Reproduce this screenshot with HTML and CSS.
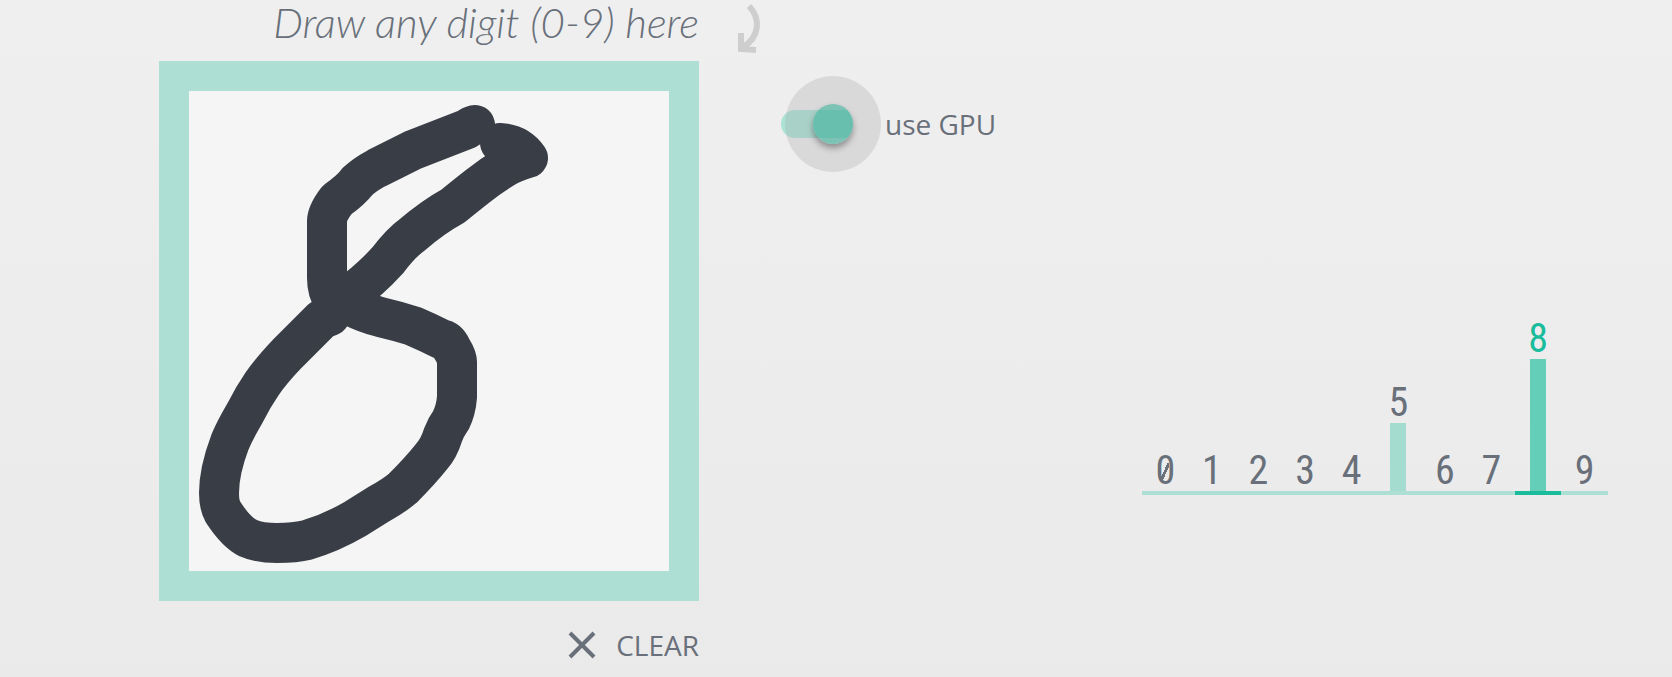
FILE: index.html
```html
<!DOCTYPE html>
<html lang="en">
<head>
<meta charset="utf-8">
<meta name="viewport" content="width=device-width, initial-scale=1">
<title>Digit recognition</title>
<link rel="stylesheet" href="styles.css">
</head>
<body>
<main class="demo">
  <section class="draw">
    <h1 class="hint">Draw any digit (0-9) here</h1>
    <svg class="pad" viewBox="0 0 480 480" role="img" aria-label="Hand-drawn eight">
      <path class="ink" d="M286 34 Q282 35 278 38 Q252 48 224 59 Q206 68 188 77 Q175 84 168 91 Q162 99 148 109 Q138 122 138 130 V187 Q138 200 144 209 Q152 211 162 215 Q176 222 191 226 Q208 230 224 235 Q238 241 252 248 Q259 249 263 258 Q268 266 268 271 V306 Q267 319 262 329 Q257 336 254 344 Q250 357 243 365 Q231 380 214 397 Q206 404 190 413 Q182 418 166 428 Q142 442 118 449 Q106 452 88 452 Q70 452 59 447 Q47 441 34 421 Q30 414 30 402 Q30 380 41 351 Q46 339 56 322 Q64 306 73 293 Q81 281 98 263 L133 228 L141 225 Q145 219 156 207 Q180 190 199 169 Q212 152 223 144 Q244 126 264 115 Q275 106 289 95 Q303 84 318 75 Q326 71 339 67 Q329 53 311 52"/>
    </svg>
    <button class="clear" type="button">
      <svg class="cross" viewBox="0 0 28 28" aria-hidden="true"><path d="M2 2 26 26M26 2 2 26"/></svg>
      <span>CLEAR</span>
    </button>
  </section>
  <section class="controls">
    <svg class="arrow" viewBox="0 0 28 56" aria-hidden="true"><path d="M14 6C26 19 25 37 7 48M6 33V49L21 50"/></svg>
    <label class="gpu"><input class="switch" type="checkbox" checked><span>use GPU</span></label>
  </section>
  <section class="chart" aria-label="Digit probabilities">
    <div class="col"><span class="digit zero">0</span></div>
    <div class="col"><span class="digit">1</span></div>
    <div class="col"><span class="digit">2</span></div>
    <div class="col"><span class="digit">3</span></div>
    <div class="col"><span class="digit">4</span></div>
    <div class="col"><span class="digit">5</span><span class="bar" style="height:68px"></span></div>
    <div class="col"><span class="digit">6</span></div>
    <div class="col"><span class="digit">7</span></div>
    <div class="col best"><span class="digit">8</span><span class="bar" style="height:132px"></span></div>
    <div class="col"><span class="digit">9</span></div>
  </section>
</main>
</body>
</html>
```
FILE: styles.css
```css
* { box-sizing: border-box; }
body {
  margin: 0;
  min-height: 100vh;
  background: linear-gradient(#efefef, #eaeaea);
  color: #69707a;
  font-family: "Open Sans", "Noto Sans", sans-serif;
  font-size: 28px;
  line-height: 40px;
}
.demo {
  display: flex;
  align-items: flex-start;
  padding: 0 64px 0 159px;
}
.draw {
  flex: 0 1 540px;
  display: flex;
  flex-direction: column;
}
.hint {
  margin: 0;
  padding-bottom: 17px;
  text-align: right;
  white-space: nowrap;
  font-family: Lato, sans-serif;
  font-weight: 300;
  font-style: italic;
  font-size: 42px;
  line-height: 44px;
}
.pad {
  display: block;
  width: 100%;
  aspect-ratio: 1;
  border: 30px solid #addfd4;
  background: #f5f5f5;
}
.ink {
  fill: none;
  stroke: #393d46;
  stroke-width: 40;
  stroke-linecap: round;
  stroke-linejoin: round;
}
.clear {
  align-self: flex-end;
  display: flex;
  align-items: center;
  gap: 20px;
  margin-top: 24px;
  padding: 0;
  border: 0;
  background: none;
  color: inherit;
  font: inherit;
  cursor: pointer;
}
.cross {
  width: 28px;
  height: 28px;
  stroke: currentColor;
  stroke-width: 4;
}
.controls { margin-left: 36px; }
.arrow {
  display: block;
  width: 28px;
  height: 56px;
  fill: none;
  stroke: #cecece;
  stroke-width: 6;
}
.gpu {
  display: flex;
  align-items: center;
  gap: 32px;
  margin-top: 48px;
  padding-left: 46px;
  white-space: nowrap;
  cursor: pointer;
}
.switch {
  position: relative;
  appearance: none;
  width: 72px;
  height: 28px;
  margin: 0;
  border-radius: 14px;
  background: #ade3d6;
}
.switch::before,
.switch::after {
  content: "";
  position: absolute;
  border-radius: 50%;
}
.switch::before {
  left: 4px;
  top: -34px;
  width: 96px;
  height: 96px;
  background: rgba(166, 166, 166, 0.29);
}
.switch::after {
  right: 0;
  top: -6px;
  width: 40px;
  height: 40px;
  background: linear-gradient(#7cc3b5 6px, #69bfae 6px 34px, #7cc3b5 34px);
  box-shadow: 0 4px 6px rgba(0, 0, 0, 0.35);
}
.chart {
  flex: 0 1 466px;
  display: flex;
  align-items: flex-end;
  height: 495px;
  margin-left: auto;
}
.col {
  flex: 1;
  display: flex;
  flex-direction: column;
  align-items: center;
  border-bottom: 4px solid #addfd4;
}
.digit {
  position: relative;
  font-family: "Liberation Sans Narrow", "Roboto Condensed", Roboto, sans-serif;
  font-size: 40px;
  line-height: 40px;
}
.zero::after {
  content: "";
  position: absolute;
  inset: 12px 6px 10px;
  background: linear-gradient(to bottom right, transparent 40%, currentColor 40% 60%, transparent 60%);
}
.bar {
  width: 16px;
  background: #a4dcd0;
}
.best { border-color: #1abc9c; }
.best .digit { color: #1abc9c; }
.best .bar { background: #64ceb8; }
```
